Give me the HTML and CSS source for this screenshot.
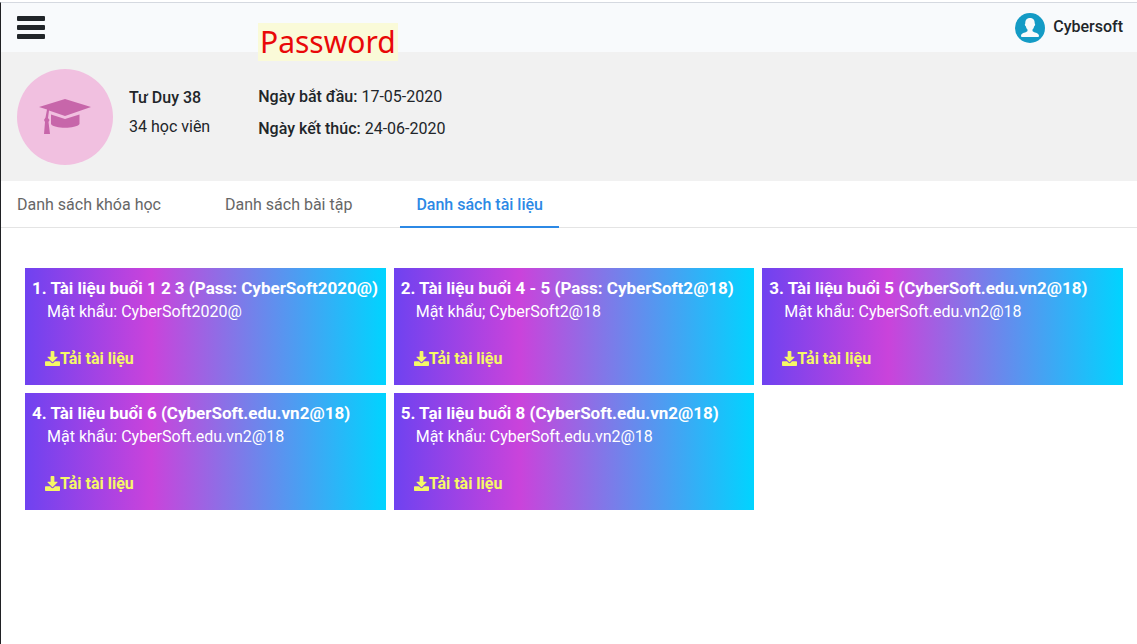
FILE: index.html
```html
<!DOCTYPE html>
<html lang="vi">
<head>
<meta charset="utf-8">
<title>Cybersoft - Danh sách tài liệu</title>
<link rel="stylesheet" href="styles.css">
</head>
<body>
<svg class="sprite" aria-hidden="true">
  <symbol id="download" viewBox="0 0 512 512"><path d="M216 0h80c13 0 24 11 24 24v168h88c18 0 27 22 14 34L270 378c-7 8-20 8-28 0L90 226c-13-12-4-34 14-34h88V24c0-13 11-24 24-24zm296 376v112c0 13-11 24-24 24H24c-13 0-24-11-24-24V376c0-13 11-24 24-24h147l49 49c20 20 52 20 72 0l49-49h147c13 0 24 11 24 24z"/></symbol>
</svg>
<div class="page">
  <header class="topbar">
    <button class="menu" type="button" aria-label="Menu"><span class="bar"></span><span class="bar"></span><span class="bar"></span></button>
    <div class="user">
      <svg class="avatar" viewBox="0 0 30 30" aria-hidden="true"><circle cx="15" cy="15" r="15" fill="#149bc5"/><path fill="#f8fafb" d="M15 5c3.200 0 4.900 2.200 4.700 5.400.8.200.5 2.400-.5 2.900-.3 1.600-1 2.600-1.700 3.300v1.500c.8 1.700 6.500 1.700 6.500 4.700 0 .8-.5 1.200-1.200 1.200H7.200c-.7 0-1.200-.4-1.200-1.200 0-3 5.700-3 6.500-4.700v-1.500c-.7-.7-1.400-1.700-1.700-3.300-1-.5-1.300-2.700-.5-2.900C10.100 7.200 11.800 5 15 5z"/></svg>
      <span>Cybersoft</span>
    </div>
    <span class="note">Password</span>
  </header>
  <section class="course">
    <div class="badge">
      <svg viewBox="0 0 52 36" aria-hidden="true"><g fill="#c766aa"><path d="M26 0 52 8 26 17 10 11.500 9 19l1.500 2-1 2 1.500 12H5L6 23l-1-2 1.500-2.500 1.500-8L0 8z"/><path d="M12 15.500 26 20l14.500-4.500V25C37 30 15 30 12 25z"/></g></svg>
    </div>
    <div class="summary">
      <h1>Tư Duy 38</h1>
      <p>34 học viên</p>
    </div>
    <div class="dates">
      <p><b>Ngày bắt đầu:</b> 17-05-2020</p>
      <p><b>Ngày kết thúc:</b> 24-06-2020</p>
    </div>
  </section>
  <nav class="tabs">
    <a href="#courses">Danh sách khóa học</a>
    <a href="#exercises">Danh sách bài tập</a>
    <a class="active" href="#documents" aria-current="page">Danh sách tài liệu</a>
  </nav>
  <main class="cards">
    <article class="card">
      <h2>1. Tài liệu buổi 1 2 3 (Pass: CyberSoft2020@)</h2>
      <p>Mật khẩu: CyberSoft2020@</p>
      <a href="#doc1"><svg aria-hidden="true"><use href="#download"/></svg>Tải tài liệu</a>
    </article>
    <article class="card">
      <h2>2. Tài liệu buổi 4 - 5 (Pass: CyberSoft2@18)</h2>
      <p>Mật khẩu; CyberSoft2@18</p>
      <a href="#doc2"><svg aria-hidden="true"><use href="#download"/></svg>Tải tài liệu</a>
    </article>
    <article class="card">
      <h2>3. Tài liệu buổi 5 (CyberSoft.edu.vn2@18)</h2>
      <p>Mật khẩu: CyberSoft.edu.vn2@18</p>
      <a href="#doc3"><svg aria-hidden="true"><use href="#download"/></svg>Tải tài liệu</a>
    </article>
    <article class="card">
      <h2>4. Tài liệu buổi 6 (CyberSoft.edu.vn2@18)</h2>
      <p>Mật khẩu: CyberSoft.edu.vn2@18</p>
      <a href="#doc4"><svg aria-hidden="true"><use href="#download"/></svg>Tải tài liệu</a>
    </article>
    <article class="card">
      <h2>5. Tại liệu buổi 8 (CyberSoft.edu.vn2@18)</h2>
      <p>Mật khẩu: CyberSoft.edu.vn2@18</p>
      <a href="#doc5"><svg aria-hidden="true"><use href="#download"/></svg>Tải tài liệu</a>
    </article>
  </main>
</div>
</body>
</html>
```
FILE: styles.css
```css
* { box-sizing: border-box; }
body {
  margin: 0;
  padding-top: 2px;
  background: #fff;
  color: #212529;
  font: 16px/24px Roboto, sans-serif;
}
h1, h2, p { margin: 0; font-size: 16px; }
a { text-decoration: none; }
.sprite { display: none; }
.page {
  min-height: calc(100vh - 2px);
  border-top: 1px solid #d5d9e0;
  border-left: 1px solid #202124;
}
.topbar {
  position: relative;
  display: flex;
  align-items: center;
  justify-content: space-between;
  height: 49px;
  padding: 0 14px 0 16px;
  background: #f8fafc;
}
.menu {
  display: flex;
  flex-direction: column;
  gap: 4px;
  padding: 0;
  border: 0;
  background: none;
}
.bar {
  width: 28px;
  height: 5px;
  border-radius: 1px;
  background: #212529;
}
.user {
  display: flex;
  align-items: center;
  gap: 8px;
  font-weight: 500;
}
.user span { padding-bottom: 2px; }
.avatar { width: 30px; height: 30px; }
.note {
  position: absolute;
  top: 20px;
  left: 257px;
  padding: 0 2px;
  background: #fafad8;
  color: #e90808;
  font: 30px/38px "Noto Sans", sans-serif;
}
.course {
  display: flex;
  align-items: center;
  padding: 16px;
  height: 129px;
  background: #f1f1f1;
}
.badge {
  display: flex;
  align-items: center;
  justify-content: center;
  width: 96px;
  height: 96px;
  border-radius: 50%;
  background: #f1c0e0;
}
.badge svg { width: 52px; height: 36px; }
.summary { margin: 0 48px 8px 16px; }
.summary h1 { margin-bottom: 5px; font-weight: 500; }
.dates { display: grid; gap: 8px; margin-bottom: 8px; }
.dates b { font-weight: 500; }
.tabs {
  display: flex;
  gap: 32px;
  border-bottom: 1px solid #e4e4e4;
}
.tabs a {
  margin-bottom: -1px;
  padding: 12px 16px 9px;
  border-bottom: 2px solid transparent;
  color: #666;
}
.tabs .active {
  border-color: #2c89e5;
  color: #2c89e5;
  font-weight: 500;
}
.cards {
  display: grid;
  grid-template-columns: repeat(3, 1fr);
  gap: 8px;
  padding: 40px 14px 40px 24px;
}
.card {
  padding: 8px 7px 14px;
  background: linear-gradient(90deg, #6f42f0 0%, #ca43db 35%, #00d4ff 100%);
  color: #fff;
}
.card h2 { font-size: 17px; font-weight: 700; white-space: nowrap; }
.card p { padding-left: 15px; }
.card a {
  display: flex;
  align-items: center;
  margin: 23px 0 0 13px;
  color: #f5f866;
  font-weight: 700;
}
.card svg { width: 15px; height: 15px; margin-bottom: 2px; fill: #f5f866; }
```
